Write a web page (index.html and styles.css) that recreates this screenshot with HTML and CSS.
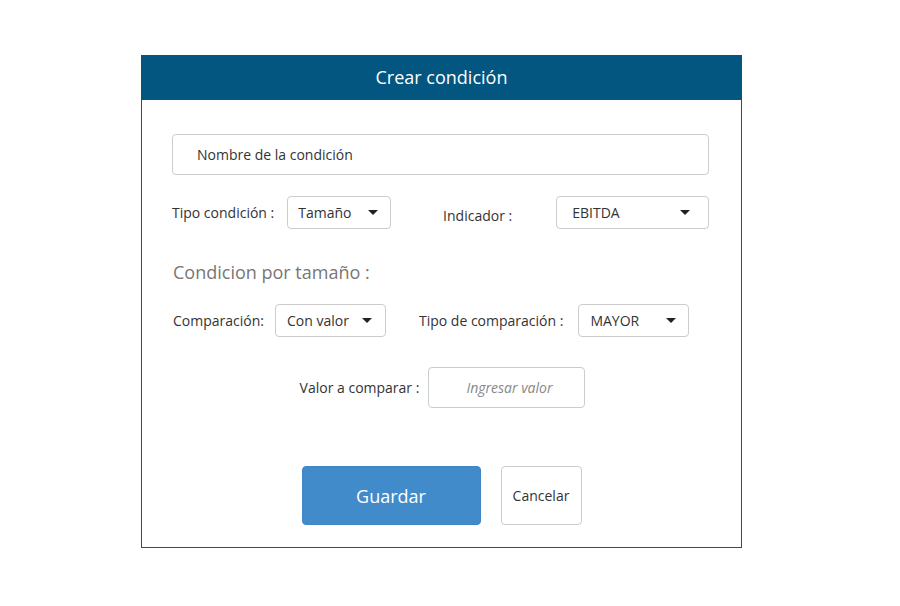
FILE: index.html
```html
<!DOCTYPE html>
<html lang="es">
<head>
<meta charset="utf-8">
<title>Crear condición</title>
<link rel="stylesheet" href="styles.css">
</head>
<body>
<div class="modal">
  <div class="modal-header">Crear condición</div>
  <div class="modal-body">
    <div class="name-input">Nombre de la condición</div>

    <div class="row row-1">
      <span class="label">Tipo condición :</span>
      <div class="select sel-tipo"><span>Tamaño</span><i class="caret"></i></div>
      <span class="label label-ind">Indicador :</span>
      <div class="select sel-ind"><span>EBITDA</span><i class="caret"></i></div>
    </div>

    <div class="section-title">Condicion por tamaño :</div>

    <div class="row row-3">
      <span class="label">Comparación:</span>
      <div class="select sel-comp"><span>Con valor</span><i class="caret"></i></div>
      <span class="label label-tipocomp">Tipo de comparación :</span>
      <div class="select sel-mayor"><span>MAYOR</span><i class="caret"></i></div>
    </div>

    <div class="row row-valor">
      <span class="label">Valor a comparar :</span>
      <div class="value-input">Ingresar valor</div>
    </div>

    <div class="actions">
      <button class="btn btn-primary">Guardar</button>
      <button class="btn btn-default">Cancelar</button>
    </div>
  </div>
</div>
</body>
</html>
```
FILE: styles.css
```css
* { box-sizing: border-box; }
html, body { margin: 0; padding: 0; background: #fff; }
body {
  font-family: "Open Sans", "Liberation Sans", sans-serif;
  font-size: 14px;
  color: #333;
  padding-top: 55px;
}
.modal {
  width: 601px;
  margin-left: 141px;
  border: 1px solid #3c4a55;
  border-top: none;
}
.modal-header {
  height: 45px;
  margin: 0 -1px;
  background: #02567f;
  color: #fff;
  font-size: 18px;
  text-align: center;
  line-height: 45px;
}
.modal-body {
  padding: 34px 32px 22px 30px;
}
.name-input {
  height: 41px;
  border: 1px solid #ccc;
  border-radius: 4px;
  padding-left: 24px;
  line-height: 39px;
  font-size: 14px;
  color: #333;
}
.row {
  display: flex;
  align-items: center;
}
.row-1 { margin-top: 21px; }
.label { white-space: nowrap; }
.select {
  height: 33px;
  border: 1px solid #ccc;
  border-radius: 4px;
  display: flex;
  align-items: center;
  justify-content: space-between;
  font-size: 14px;
  color: #333;
}
.caret {
  width: 0;
  height: 0;
  border-left: 5px solid transparent;
  border-right: 5px solid transparent;
  border-top: 5px solid #222;
}
.sel-tipo { width: 104px; margin-left: 13px; padding: 0 12px 0 10px; }
.label-ind { margin-left: 52px; position: relative; top: 3px; }
.sel-ind { width: 153px; margin-left: 44px; padding: 0 18px 0 15px; }
.section-title {
  margin-top: 31px;
  font-size: 18px;
  color: #777;
  padding-left: 1px;
  line-height: 24px;
}
.row-3 { margin-top: 20px; padding-left: 1px; }
.sel-comp { width: 111px; margin-left: 11px; padding: 0 13px 0 11px; }
.label-tipocomp { margin-left: 33px; }
.sel-mayor { width: 111px; margin-left: 15px; padding: 0 12px 0 11px; }
.row-valor {
  margin-top: 30px;
  justify-content: center;
  padding-left: 4px;
}
.value-input {
  width: 157px;
  height: 41px;
  margin-left: 9px;
  border: 1px solid #ccc;
  border-radius: 4px;
  padding-left: 37px;
  line-height: 39px;
  font-style: italic;
  color: #888;
  font-size: 14px;
}
.actions {
  margin-top: 58px;
  display: flex;
  justify-content: center;
  gap: 20px;
  padding-left: 2px;
}
.btn {
  font-family: "Open Sans", "Liberation Sans", sans-serif;
  height: 59px;
  border-radius: 4px;
  cursor: pointer;
  padding: 0;
}
.btn-primary {
  width: 179px;
  background: #428bca;
  border: 1px solid #3f86c4;
  color: #fff;
  font-size: 18px;
}
.btn-default {
  width: 81px;
  background: #fff;
  border: 1px solid #ccc;
  color: #333;
  font-size: 14px;
}
```
